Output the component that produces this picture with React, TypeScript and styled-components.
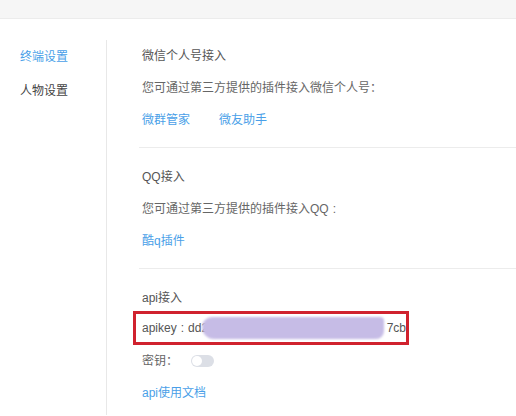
import React from "react";
import styled, { createGlobalStyle } from "styled-components";

const Global = createGlobalStyle`
  html, body { margin: 0; padding: 0; background: #fff; }
  body { font-family: "Liberation Sans", "Noto Sans CJK SC", "Noto Sans", sans-serif; font-size: 12px; color: #666; }
`;

const Page = styled.div`
  width: 516px;
  height: 416px;
  overflow: hidden;
  background: #fff;
`;

const Header = styled.div`
  height: 18px;
  background: #f6f6f6;
  border-bottom: 1px solid #ececec;
`;

const Body = styled.div`
  display: flex;
  padding-top: 21px;
`;

const Sidebar = styled.nav`
  width: 107px;
  flex-shrink: 0;
  border-right: 1px solid #e8e8e8;
  padding-left: 20px;
  box-sizing: border-box;
  min-height: 375px;
`;

const NavItem = styled.div<{ $active?: boolean }>`
  line-height: 34px;
  height: 34px;
  color: ${(p) => (p.$active ? "#4a9fe8" : "#444")};
`;

const Content = styled.main`
  flex: 1;
  padding-left: 32px;
`;

const Section = styled.section`
  padding-left: 3px;
`;

const Row = styled.div`
  display: flex;
  align-items: center;
  height: 32px;
  line-height: 32px;
  white-space: nowrap;
`;

const Title = styled(Row)`
  color: #555;
`;

const Link = styled.a`
  color: #4a9fe8;
  text-decoration: none;
  margin-right: 29px;
`;

const Divider = styled.hr`
  border: none;
  border-top: 1px solid #ececec;
  margin: 11px 0 13px 0;
`;

const Colon = styled.span`
  margin: 0 4px;
`;

const KeyBox = styled.div`
  display: flex;
  align-items: center;
  height: 34px;
  width: 276px;
  box-sizing: border-box;
  margin: -3px 0 0 -9px;
  padding-left: 6px;
  border: 3px solid #d0222e;
  white-space: nowrap;
  color: #555;
`;

const Redact = styled.span`
  display: inline-block;
  width: 182px;
  height: 22px;
  background: #c6bce6;
  border-radius: 10px 4px 8px 12px;
  filter: blur(1px);
  margin: 0 3px 0 -6px;
`;

const Toggle = styled.span`
  display: inline-block;
  position: relative;
  width: 23px;
  height: 12px;
  border-radius: 6px;
  background: #dcdfe6;
  margin-left: 13px;
  &::after {
    content: "";
    position: absolute;
    left: 1px;
    top: 1px;
    width: 10px;
    height: 10px;
    border-radius: 50%;
    background: #fff;
  }
`;

export default function App() {
  return (
    <Page>
      <Global />
      <Header />
      <Body>
        <Sidebar>
          <NavItem $active>终端设置</NavItem>
          <NavItem>人物设置</NavItem>
        </Sidebar>
        <Content>
          <Section>
            <Title>微信个人号接入</Title>
            <Row>您可通过第三方提供的插件接入微信个人号：</Row>
            <Row>
              <Link>微群管家</Link>
              <Link>微友助手</Link>
            </Row>
          </Section>
          <Divider />
          <Section>
            <Title>QQ接入</Title>
            <Row>
              您可通过第三方提供的插件接入QQ<Colon>:</Colon>
            </Row>
            <Row>
              <Link>酷q插件</Link>
            </Row>
          </Section>
          <Divider />
          <Section>
            <Title>api接入</Title>
            <KeyBox>
              apikey<Colon>:</Colon>dd2<Redact />7cb
            </KeyBox>
            <Row>
              密钥：<Toggle />
            </Row>
            <Row>
              <Link>api使用文档</Link>
            </Row>
          </Section>
        </Content>
      </Body>
    </Page>
  );
}
